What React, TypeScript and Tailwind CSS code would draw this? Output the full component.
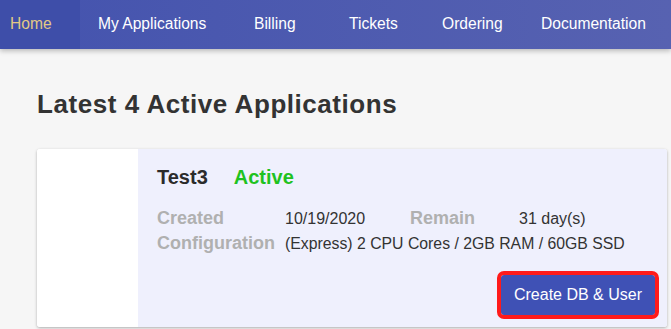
const NAV_ITEMS = [
  { label: "My Applications", width: "w-[156px]" },
  { label: "Billing", width: "w-[95px]" },
  { label: "Tickets", width: "w-[93px]" },
  { label: "Ordering", width: "w-[99px]" },
  { label: "Documentation", width: "flex-1" },
];

export default function App() {
  return (
    <div className="min-h-[329px] w-full bg-[#f6f6f6] font-['Liberation_Sans',Arial,sans-serif]">
      <nav className="relative z-10 flex h-[49px] items-center bg-gradient-to-r from-[#4453ae] to-[#5762b1] text-[15.6px] text-white shadow-[0_2px_5px_rgba(0,0,0,0.25)]">
        <a className="flex h-full w-[80px] items-center bg-[#3e4ea9] pb-[2px] pl-[10px] text-[#e3c985]">Home</a>
        {NAV_ITEMS.map((item) => (
          <a key={item.label} className={`flex h-full items-center pb-[2px] pl-[18px] ${item.width}`}>
            {item.label}
          </a>
        ))}
      </nav>

      <main className="pl-[37px] pr-[4px]">
        <h1 className="mt-[42px] text-[26px] font-bold leading-[26px] tracking-[0.55px] text-[#333]">
          Latest 4 Active Applications
        </h1>

        <article className="mt-[32px] flex h-[178px] overflow-hidden rounded-[3px] bg-white shadow-[0_1px_3px_rgba(0,0,0,0.3)]">
          <div className="w-[101px] bg-white" />
          <div className="flex flex-1 flex-col bg-[#eff0fd] pl-[19px] pr-[12px] pt-[18px]">
            <div className="flex items-baseline text-[20px] font-bold leading-[20px]">
              <span className="text-[#2b2b2b]">Test3</span>
              <span className="ml-[26px] text-[#1fc21f]">Active</span>
            </div>

            <div className="mt-[19px] grid grid-cols-[128px_125px_109px_auto] items-baseline leading-[24px]">
              <span className="text-[18px] font-bold text-[#b0b0b0]">Created</span>
              <span className="text-[16px] text-[#333]">10/19/2020</span>
              <span className="text-[18px] font-bold text-[#b0b0b0]">Remain</span>
              <span className="text-[16px] text-[#333]">31 day(s)</span>
              <span className="text-[18px] font-bold text-[#b0b0b0]">Configuration</span>
              <span className="col-span-3 whitespace-nowrap text-[15.8px] text-[#333]">
                (Express) 2 CPU Cores / 2GB RAM / 60GB SSD
              </span>
            </div>

            <div className="mt-[19px] flex justify-end">
              <button className="h-[40px] rounded-[3px] bg-[#3f51b5] px-[13px] text-[16px] text-white outline outline-[4px] outline-offset-0 outline-[#ff1a1a] shadow-[1px_1px_3px_rgba(0,0,0,0.3)]">
                Create DB &amp; User
              </button>
            </div>
          </div>
        </article>
      </main>
    </div>
  );
}
